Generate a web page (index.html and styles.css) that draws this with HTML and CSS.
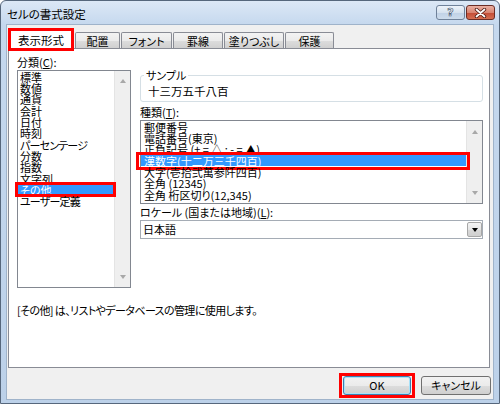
FILE: index.html
```html
<!DOCTYPE html>
<html lang="ja">
<head>
<meta charset="utf-8">
<title>セルの書式設定</title>
<link rel="stylesheet" href="styles.css">
</head>
<body>
<div class="window">
  <div class="titlebar">
    <span class="title">セルの書式設定</span>
    <div class="caption">
      <div class="cap help"><span class="q">?</span></div>
      <div class="cap close">
        <svg width="13" height="10" viewBox="0 0 13 10">
          <path d="M2.5 1.5 L10.5 8.5 M10.5 1.5 L2.5 8.5" stroke="#4a1710" stroke-width="3.4" stroke-linecap="round"/>
          <path d="M2.5 1.5 L10.5 8.5 M10.5 1.5 L2.5 8.5" stroke="#ffffff" stroke-width="1.8" stroke-linecap="round"/>
        </svg>
      </div>
    </div>
  </div>
  <div class="client">
    <div class="tabs">
      <div class="tab active">表示形式</div>
      <div class="tab">配置</div>
      <div class="tab">フォント</div>
      <div class="tab">罫線</div>
      <div class="tab">塗りつぶし</div>
      <div class="tab">保護</div>
    </div>
    <div class="panel">
      <div class="columns">
        <div class="left">
          <div class="label">分類(<u>C</u>):</div>
          <div class="listbox cat">
            <ul class="items">
              <li>標準</li>
              <li>数値</li>
              <li>通貨</li>
              <li>会計</li>
              <li>日付</li>
              <li>時刻</li>
              <li class="kana">パーセンテージ</li>
              <li>分数</li>
              <li>指数</li>
              <li>文字列</li>
              <li class="sel">その他</li>
              <li class="kana">ユーザー定義</li>
            </ul>
            <div class="vscroll"><span class="arrow up"></span><span class="arrow down"></span></div>
          </div>
        </div>
        <div class="right">
          <fieldset class="sample">
            <legend>サンプル</legend>
            <div class="sample-value">十三万五千八百</div>
          </fieldset>
          <div class="label types-label">種類(<u>T</u>):</div>
          <div class="listbox types">
            <ul class="items">
              <li>郵便番号</li>
              <li>電話番号(東京)</li>
              <li>正負記号 (+ = △ ; - = ▲)</li>
              <li class="sel">漢数字(十二万三千四百)</li>
              <li>大字(壱拾弐萬参阡四百)</li>
              <li>全角 (12345)</li>
              <li>全角 桁区切り(12,345)</li>
            </ul>
            <div class="vscroll"><span class="arrow up"></span><span class="arrow down"></span></div>
          </div>
          <div class="label locale-label">ロケール (国または地域)(<u>L</u>):</div>
          <div class="combo">
            <span class="combo-text">日本語</span>
            <span class="combo-btn"><span class="tri"></span></span>
          </div>
        </div>
      </div>
      <p class="desc">[その他] は、リストやデータベースの管理に使用します。</p>
    </div>
    <div class="buttons">
      <button class="btn ok">OK</button>
      <button class="btn cancel">キャンセル</button>
    </div>
  </div>
</div>
</body>
</html>
```

FILE: styles.css
```css
* { box-sizing: border-box; }
html, body { margin: 0; padding: 0; }
body {
  width: 500px;
  height: 404px;
  overflow: hidden;
  font-family: "Noto Sans CJK JP", "Liberation Sans", sans-serif;
  font-size: 11px;
  color: #000;
  font-feature-settings: "palt";
  background: #fff;
}

.window {
  width: 500px;
  height: 404px;
  border: 1px solid #56677c;
  border-radius: 6px 6px 0 0;
  background: linear-gradient(#dce8f6, #c5d8ee 24px, #bcd1e9);
  padding: 0 5px 3px;
  display: flex;
  flex-direction: column;
}

.titlebar {
  height: 23px;
  display: flex;
  align-items: flex-start;
  justify-content: space-between;
  padding-left: 1px;
}
.title { font-size: 11.5px; line-height: 24px; padding-top: 1px; }
.caption { display: flex; gap: 1px; margin-top: 4px; margin-right: -1px; }
.cap {
  height: 15px;
  width: 29px;
  border-radius: 3px;
  border: 1px solid #6f8199;
  display: flex;
  align-items: center;
  justify-content: center;
}
.help { background: linear-gradient(#edf3fa, #d6e2ef 50%, #c0d1e6 51%, #cddcec); }
.help .q {
  font-family: "DejaVu Sans", sans-serif;
  font-weight: bold;
  font-size: 11px;
  line-height: 13px;
  color: #f4f7fb;
  -webkit-text-stroke: 0.7px #55657a;
}
.close {
  border-color: #6b2d25;
  background: linear-gradient(#eab0a2, #d98572 50%, #c24b35 51%, #d66f52);
}
.close svg { display: block; }

.client {
  flex: 1;
  background: #f0f0f0;
  border: 1px solid #9fb3ca;
  display: flex;
  flex-direction: column;
}

.tabs {
  height: 23px;
  display: flex;
  align-items: flex-end;
  gap: 1px;
  margin-left: 1px;
  position: relative;
  z-index: 1;
}
.tab {
  height: 16px;
  border: 1px solid #898c95;
  border-bottom: none;
  border-radius: 2px 2px 0 0;
  background: linear-gradient(#f3f3f3, #ebebeb 50%, #dddddd 51%, #d0d0d0);
  display: flex;
  align-items: center;
  justify-content: center;
  line-height: 14px;
}
.tab:nth-child(1) { width: 66px; }
.tab:nth-child(2) { width: 45px; }
.tab:nth-child(3) { width: 51px; }
.tab:nth-child(4) { width: 50px; }
.tab:nth-child(5) { width: 60px; }
.tab:nth-child(6) { width: 49px; }
.tab.active {
  height: 21px;
  background: #fff;
  margin-bottom: -1px;
  padding-top: 2px;
  position: relative;
  font-size: 11.5px;
}
.tab.active::after {
  content: "";
  position: absolute;
  left: -1px;
  top: -1px;
  right: -1px;
  bottom: -2px;
  border: 3px solid #f00;
}

.panel {
  height: 320px;
  margin: 0 3px 0 1px;
  background: #fff;
  border: 1px solid #898c95;
  padding: 6px 6px 0 8px;
  display: flex;
  flex-direction: column;
}
.columns { display: flex; gap: 9px; }
.left { width: 114px; }
.right { flex: 1; min-width: 0; }

.label { line-height: 15px; height: 15px; white-space: nowrap; }
.types-label { margin-top: 3px; }
.locale-label { margin-top: 1px; }

.listbox {
  display: flex;
  border: 1px solid #828790;
  background: #fff;
}
.cat { height: 218px; }
.types { height: 84px; }
.items {
  flex: 1;
  min-width: 0;
  list-style: none;
  margin: 0;
  padding: 0;
}
.items li {
  line-height: 11.35px;
  height: 11.35px;
  padding-left: 2px;
  padding-top: 0.5px;
  white-space: nowrap;
  position: relative;
}
.items li.kana { letter-spacing: -0.8px; }
.types .items li { padding-left: 3px; }
.items li.sel { background: #3399ff; color: #fff; }
.cat li.sel::after {
  content: "";
  position: absolute;
  left: -3px;
  top: -2px;
  right: -2px;
  bottom: -1px;
  border: 3px solid #f00;
}
.types li.sel::after {
  content: "";
  position: absolute;
  left: -5px;
  top: -3px;
  right: -4px;
  bottom: -4px;
  border: 3px solid #f00;
}

.vscroll {
  width: 16px;
  background: #efefef;
  border-left: 1px solid #e4e4e4;
  display: flex;
  flex-direction: column;
  justify-content: space-between;
  align-items: center;
  padding: 8px 0;
}
.types .vscroll { padding: 9px 0 8px; }
.arrow {
  width: 0;
  height: 0;
  border-left: 3.5px solid transparent;
  border-right: 3.5px solid transparent;
}
.arrow.up { border-bottom: 4px solid #a8a8a8; }
.arrow.down { border-top: 4px solid #a8a8a8; }

.sample {
  margin: 13px 0 0;
  padding: 2px 6px 3px 7px;
  border: 1px solid #d5dfe5;
  border-radius: 3px;
  min-width: 0;
}
.sample legend {
  padding: 0 2px;
  margin-left: -4px;
  line-height: 14px;
}
.sample-value { line-height: 14px; font-size: 11.5px; }

.combo {
  height: 19px;
  display: flex;
  align-items: center;
  border: 1px solid #a5acb5;
  background: #fff;
}
.combo-text { padding-left: 2px; line-height: 17px; }
.combo-btn {
  width: 15px;
  height: 15px;
  margin-left: auto;
  border: 1px solid #a7a7a7;
  border-radius: 2px;
  background: linear-gradient(#f4f4f4, #e6e6e6 50%, #d8d8d8 51%, #d0d0d0);
  display: flex;
  align-items: center;
  justify-content: center;
}
.tri {
  width: 0;
  height: 0;
  border-left: 3.5px solid transparent;
  border-right: 3.5px solid transparent;
  border-top: 4px solid #000;
}

.desc { margin: 15px 0 0; line-height: 14px; white-space: nowrap; letter-spacing: -0.6px; }

.buttons {
  display: flex;
  justify-content: flex-end;
  gap: 10px;
  margin-top: 8px;
  padding-right: 2px;
}
.btn {
  height: 19px;
  font: inherit;
  color: #000;
  border: 1px solid #707070;
  border-radius: 3px;
  background: linear-gradient(#f2f2f2, #ebebeb 50%, #dddddd 51%, #cfcfcf);
  padding: 0;
  line-height: 17px;
}
.ok {
  width: 68px;
  border-color: #3c7fb1;
  box-shadow: inset 0 0 0 1px #a9e1f8;
  position: relative;
}
.ok::after {
  content: "";
  position: absolute;
  left: -5px;
  top: -4px;
  right: -5px;
  bottom: -4px;
  border: 3px solid #f00;
}
.cancel { width: 70px; }
```
